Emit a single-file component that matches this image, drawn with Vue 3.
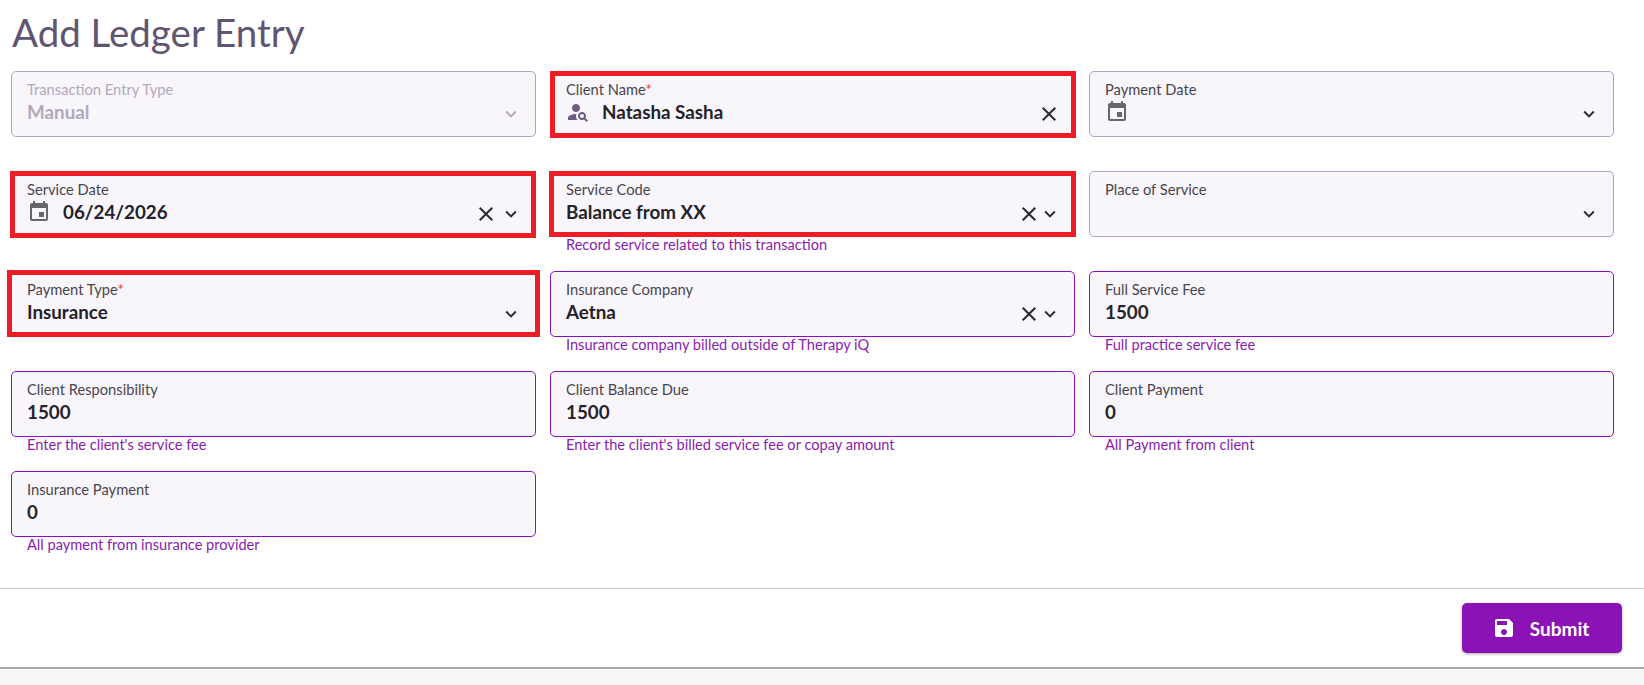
<template>
  <div class="page">
    <h1 class="title">Add Ledger Entry</h1>

    <div class="form-grid">
      <div v-for="field in fields" :key="field.label" class="cell">
        <div class="field" :class="{ disabled: field.disabled, accent: field.hint || field.accent }">
          <div class="field-body">
            <div class="label">{{ field.label }}<span v-if="field.required" class="req">*</span></div>
            <div class="value-row">
              <svg v-if="field.icon === 'event'" class="lead-icon event" viewBox="0 0 24 24"><path :d="icons.event" /></svg>
              <svg v-if="field.icon === 'person'" class="lead-icon person" viewBox="0 0 24 24"><path :d="icons.person" /></svg>
              <span class="value">{{ field.value }}</span>
            </div>
          </div>
          <div class="actions" :class="{ tight: !field.icon }">
            <svg v-if="field.clear" class="clear-icon" viewBox="0 0 24 24"><path :d="icons.close" /></svg>
            <svg v-if="field.select" class="chevron" viewBox="0 0 24 24"><path :d="icons.chevron" /></svg>
          </div>
          <span v-if="field.mark" class="mark" :class="field.mark"></span>
        </div>
        <div v-if="field.hint" class="hint">{{ field.hint }}</div>
      </div>
    </div>

    <div class="footer">
      <button class="submit">
        <svg viewBox="0 0 24 24"><path :d="icons.save" /></svg>
        Submit
      </button>
    </div>
  </div>
</template>

<script setup>
const icons = {
  event: 'M17 12h-5v5h5v-5zM16 1v2H8V1H6v2H5c-1.11 0-1.99.9-1.99 2L3 19c0 1.1.89 2 2 2h14c1.1 0 2-.9 2-2V5c0-1.1-.9-2-2-2h-1V1h-2zm3 18H5V8h14v11z',
  person: 'M10 12c2.21 0 4-1.79 4-4s-1.79-4-4-4-4 1.79-4 4 1.79 4 4 4zM10.35 14.01C7.62 13.91 2 15.27 2 18v2h9.54c-2.47-2.76-1.23-5.89-1.19-5.99zM19.43 18.02c.36-.59.57-1.28.57-2.02 0-2.21-1.79-4-4-4s-4 1.79-4 4 1.79 4 4 4c.74 0 1.43-.22 2.02-.57L20.59 22 22 20.59l-2.57-2.57zM16 18c-1.1 0-2-.9-2-2s.9-2 2-2 2 .9 2 2-.9 2-2 2z',
  close: 'M19 6.41 17.59 5 12 10.59 6.41 5 5 6.41 10.59 12 5 17.59 6.41 19 12 13.41 17.59 19 19 17.59 13.41 12z',
  chevron: 'M16.59 8.59 12 13.17 7.41 8.59 6 10l6 6 6-6z',
  save: 'M17 3H5c-1.11 0-2 .9-2 2v14c0 1.1.89 2 2 2h14c1.1 0 2-.9 2-2V7l-4-4zm-5 16c-1.66 0-3-1.34-3-3s1.34-3 3-3 3 1.34 3 3-1.34 3-3 3zm3-10H5V5h10v4z'
};

const fields = [
  { label: 'Transaction Entry Type', value: 'Manual', select: true, disabled: true },
  { label: 'Client Name', value: 'Natasha Sasha', required: true, icon: 'person', clear: true, mark: 'mark-name' },
  { label: 'Payment Date', value: '', icon: 'event', select: true },
  { label: 'Service Date', value: '06/24/2026', icon: 'event', clear: true, select: true, mark: 'mark-date' },
  { label: 'Service Code', value: 'Balance from XX', clear: true, select: true, mark: 'mark-code', hint: 'Record service related to this transaction' },
  { label: 'Place of Service', value: '', select: true },
  { label: 'Payment Type', value: 'Insurance', required: true, select: true, accent: true, mark: 'mark-type' },
  { label: 'Insurance Company', value: 'Aetna', clear: true, select: true, hint: 'Insurance company billed outside of Therapy iQ' },
  { label: 'Full Service Fee', value: '1500', hint: 'Full practice service fee' },
  { label: 'Client Responsibility', value: '1500', hint: "Enter the client's service fee" },
  { label: 'Client Balance Due', value: '1500', hint: "Enter the client's billed service fee or copay amount" },
  { label: 'Client Payment', value: '0', hint: 'All Payment from client' },
  { label: 'Insurance Payment', value: '0', hint: 'All payment from insurance provider' }
];
</script>

<style scoped>
.page {
  height: 685px;
  background: #f7f7f7;
  font-family: Lato, "Noto Sans", sans-serif;
  overflow: hidden;
}

.title {
  margin: 0;
  padding: 9px 0 0 12px;
  height: 62px;
  box-sizing: border-box;
  background: #fff;
  font-size: 38.5px;
  line-height: 46px;
  font-weight: 400;
  color: #5f5570;
}

.form-grid {
  display: grid;
  grid-template-columns: repeat(3, 525px);
  grid-auto-rows: 100px;
  column-gap: 14px;
  padding: 9px 30px 0 11px;
  height: 526px;
  box-sizing: border-box;
  background: #fff;
}

.field {
  position: relative;
  display: flex;
  align-items: center;
  height: 66px;
  box-sizing: border-box;
  padding: 0 15px;
  border: 1px solid #b2a3bd;
  border-radius: 5px;
  background: #f8f6fa;
}

.field.accent {
  border-color: #8a0fc0;
}

.field-body {
  flex: 1;
  min-width: 0;
  margin-top: -3px;
}

.label {
  font-size: 14.7px;
  line-height: 18px;
  color: #49454f;
}

.req {
  color: #e53935;
}

.value-row {
  display: flex;
  align-items: center;
  height: 28px;
}

.value {
  font-size: 18.8px;
  font-weight: 700;
  color: #24222a;
}

.lead-icon {
  width: 24px;
  height: 24px;
  margin-right: 12px;
  flex: none;
}

.lead-icon.event {
  fill: #67666c;
}

.lead-icon.person {
  fill: #6f5c80;
}

.actions {
  display: flex;
  align-items: center;
  margin-top: 19px;
  margin-right: -2px;
}

.clear-icon {
  width: 24px;
  height: 24px;
  fill: #2c2a30;
}

.chevron {
  width: 22px;
  height: 22px;
  margin-left: 2px;
  fill: #2c2a30;
}

.tight .chevron {
  margin-left: -2px;
}

.disabled .label,
.disabled .value {
  color: #b3a8bd;
}

.disabled .chevron {
  fill: #b3a8bd;
}

.hint {
  margin-top: -1px;
  padding: 0 16px;
  font-size: 14.6px;
  line-height: 17px;
  color: #8a1bb0;
}

/* red annotation boxes drawn over the screenshot */
.mark {
  position: absolute;
  border: 5px solid #ee1c25;
  pointer-events: none;
}

.mark-name {
  inset: -1px -2px -2px -1px;
}

.mark-date {
  inset: -1px -1px -2px -2px;
}

.mark-code {
  inset: -1px -2px -1px -2px;
}

.mark-type {
  inset: -2px -5px -1px -5px;
}

.footer {
  display: flex;
  justify-content: flex-end;
  align-items: center;
  height: 81px;
  box-sizing: border-box;
  padding-right: 22px;
  border-top: 1px solid #c9c9c9;
  border-bottom: 2px solid #a9a9a9;
  background: #fff;
}

.submit {
  display: flex;
  align-items: center;
  justify-content: center;
  gap: 14px;
  width: 160px;
  height: 50px;
  padding: 0 3px 0 0;
  border: none;
  border-radius: 5px;
  background: #8b12b4;
  color: #fff;
  font-family: inherit;
  font-size: 19px;
  font-weight: 700;
  box-shadow: 0 1px 3px rgba(0, 0, 0, 0.35);
}

.submit svg {
  width: 24px;
  height: 24px;
  fill: #fff;
}
</style>
